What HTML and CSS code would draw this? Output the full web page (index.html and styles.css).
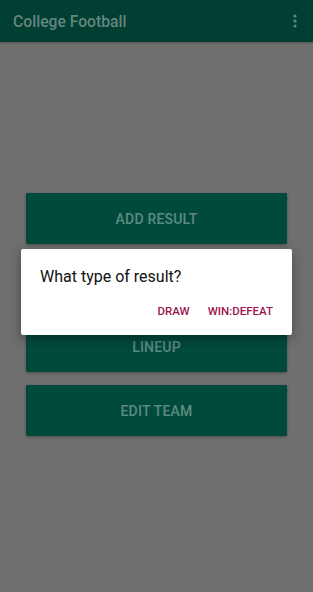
FILE: index.html
```html
<!DOCTYPE html>
<html lang="en">
<head>
    <meta charset="UTF-8">
    <meta name="viewport" content="width=device-width, initial-scale=1.0">
    <title>College Football</title>
    <link rel="stylesheet" href="styles.css">
</head>
<body>
    <header class="app-bar">
        <h1>College Football</h1>
        <svg class="menu-icon" width="4" height="14" viewBox="0 0 4 14">
            <circle cx="2" cy="2" r="1.6"/>
            <circle cx="2" cy="7" r="1.6"/>
            <circle cx="2" cy="12" r="1.6"/>
        </svg>
    </header>

    <main class="menu">
        <button class="menu-btn">Add Result</button>
        <!-- covered by the dialog -->
        <button class="menu-btn" aria-hidden="true"></button>
        <button class="menu-btn">Lineup</button>
        <button class="menu-btn">Edit Team</button>
    </main>

    <div class="dialog-layer">
        <div class="dialog">
            <p class="dialog-title">What type of result?</p>
            <div class="dialog-actions">
                <button class="action">Draw</button>
                <button class="action">Win:Defeat</button>
            </div>
        </div>
    </div>
</body>
</html>
```

FILE: styles.css
```css
:root {
    --bar-color: #013f33;
    --btn-color: #004a3c;
    --btn-text: #5e8a80;
    --bg-color: #6f6f6f;
    --accent: #9b1650;
}

body {
    font-family: Roboto, "Noto Sans", sans-serif;
    margin: 0;
    padding: 0;
    width: 313px;
    height: 592px;
    background-color: var(--bg-color);
    overflow: hidden;
}

.app-bar {
    height: 42px;
    background-color: var(--bar-color);
    display: flex;
    justify-content: space-between;
    align-items: center;
    padding: 0 16px 0 13px;
    box-sizing: border-box;
    box-shadow: 0 1px 2px rgba(0,0,0,0.25);
}

.app-bar h1 {
    margin: 0;
    font-size: 15.7px;
    font-weight: 500;
    color: #64857d;
}

.menu-icon {
    fill: #64857d;
}

.menu {
    display: flex;
    flex-direction: column;
    gap: 13px;
    padding: 151px 26px 0 26px;
}

.menu-btn {
    height: 51px;
    border: none;
    border-radius: 1px;
    background-color: var(--btn-color);
    color: var(--btn-text);
    font-family: Roboto, sans-serif;
    font-size: 14px;
    font-weight: 500;
    text-transform: uppercase;
    letter-spacing: 0.2px;
    box-shadow: 0 1px 3px rgba(0,0,0,0.3);
}

.dialog-layer {
    position: absolute;
    left: 0;
    top: 0;
    width: 313px;
    height: 592px;
}

.dialog {
    position: absolute;
    left: 21px;
    top: 249px;
    width: 271px;
    height: 86px;
    background-color: #fff;
    border-radius: 2px;
    box-shadow: 0 4px 12px rgba(0,0,0,0.35);
    box-sizing: border-box;
    padding: 16px 0 0 19px;
}

.dialog-title {
    margin: 0;
    font-size: 16px;
    color: #111;
    line-height: 24px;
}

.dialog-actions {
    display: flex;
    justify-content: flex-end;
    padding: 11px 10px 0 0;
}

.action {
    background: none;
    border: none;
    padding: 4px 9px;
    font-family: Roboto, sans-serif;
    font-size: 11.5px;
    font-weight: 500;
    text-transform: uppercase;
    color: var(--accent);
}
```
